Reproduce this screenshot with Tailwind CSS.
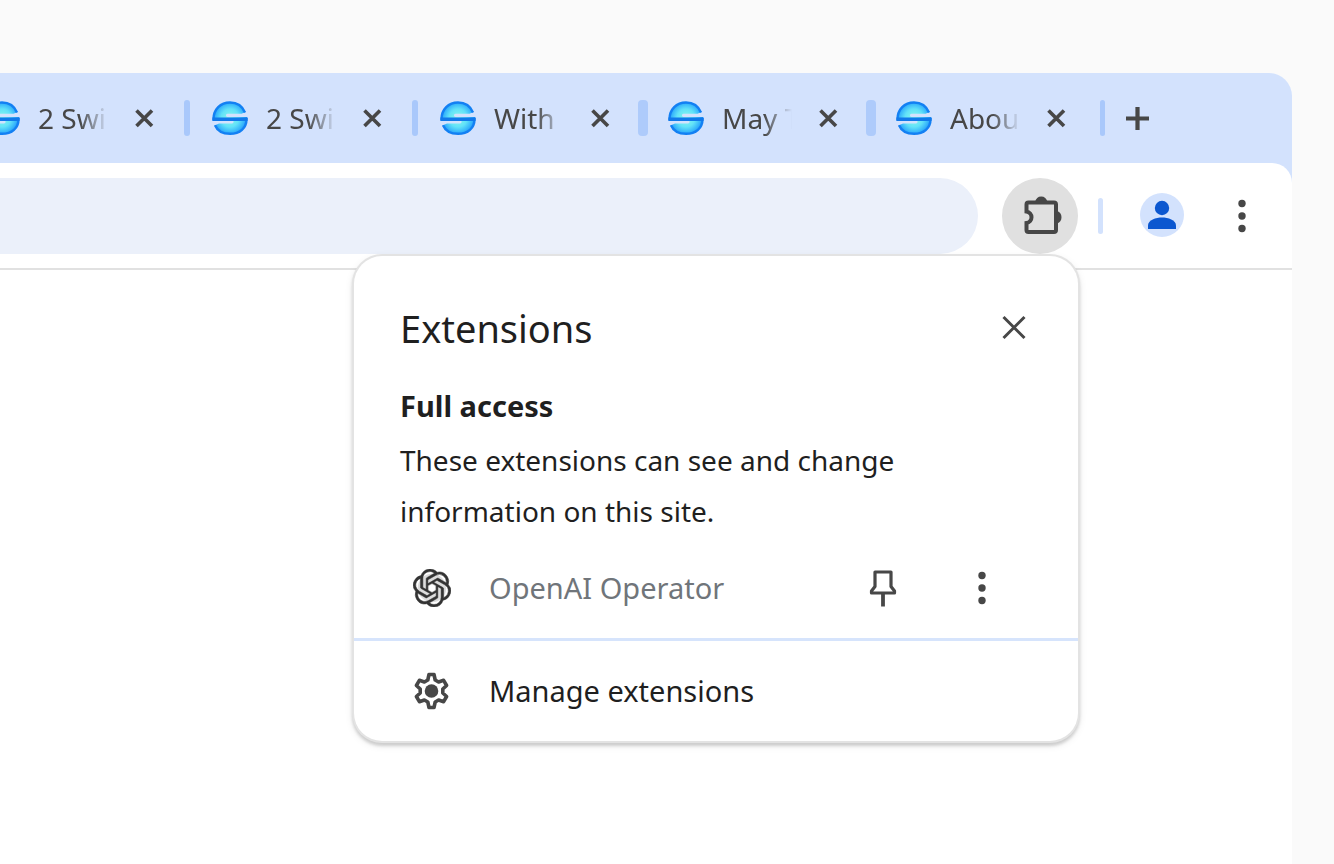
<!DOCTYPE html>
<html lang="en">
<head>
<meta charset="utf-8">
<title>Extensions</title>
<script src="https://cdn.jsdelivr.net/npm/@tailwindcss/browser@4"></script>
</head>
<body class="flex min-h-screen overflow-x-hidden bg-[#fafafa] pt-[73px] pr-[42px] font-['Noto_Sans',sans-serif] text-[#474747]">
<svg class="absolute size-0" aria-hidden="true">
  <defs>
    <radialGradient id="glow" gradientUnits="userSpaceOnUse" cx="18" cy="18" r="18">
      <stop offset="0" stop-color="#8cf8ea"/><stop offset="0.5" stop-color="#62e2f8"/><stop offset="0.800" stop-color="#35b4fb"/><stop offset="1" stop-color="#1f86f5"/>
    </radialGradient>
    <symbol id="site" viewBox="0 0 36 36">
      <path d="M1 20C0 10 8 2.200 18 2.200c7 0 13 4 15.500 9.800l-4 1.800H15.500c-2 0-2 3.200 0 3.200H35.200C36 27 28 34 18 34 10.500 34 5 31 2.500 25.500l4.500-2H20c2 0 2-3.500 0-3.500z" fill="url(#glow)"/>
      <path d="M33 12.500C30.500 6.500 25.500 2.500 18 2.500 8.500 2.500 1.500 9.500 1.500 19.200H34.500C34.500 28 28 33.800 18 33.800 10.500 33.800 5.500 31 3 25.200" fill="none" stroke="#1380f3" stroke-width="2.400"/>
      <path d="M0.500 19.200H35.500" stroke="#1179ea" stroke-width="3.600"/>
    </symbol>
    <symbol id="close" viewBox="0 0 36 36"><path d="M10.500 10.500 26 26M26 10.500 10.500 26" stroke="currentColor" stroke-width="3.600" fill="none"/></symbol>
    <symbol id="dots" viewBox="0 0 44 44"><g fill="currentColor"><circle cx="22" cy="9.500" r="3.700"/><circle cx="22" cy="22" r="3.700"/><circle cx="22" cy="34.500" r="3.700"/></g></symbol>
  </defs>
</svg>
<div class="relative min-w-0 flex-1 rounded-tr-[23px] bg-white">
  <header class="rounded-tr-[23px] bg-[#d3e2fd]">
    <nav aria-label="Tabs" class="flex h-[90px] items-center overflow-hidden text-[28px] leading-9">
      <div class="-ml-4 flex w-[228px] shrink-0 items-center">
        <svg class="size-9 shrink-0"><use href="#site"/></svg>
        <a href="#" class="ml-[18px] w-[70px] overflow-hidden whitespace-nowrap [mask-image:linear-gradient(to_right,black_60%,transparent_100%)]">2 Swi</a>
        <button aria-label="Close tab" class="ml-[18px]"><svg class="size-9"><use href="#close"/></svg></button>
        <span class="ml-[22px] h-9 w-[6px] rounded-sm bg-[#a9c8fb]"></span>
      </div>
      <div class="flex w-[228px] shrink-0 items-center">
        <svg class="size-9 shrink-0"><use href="#site"/></svg>
        <a href="#" class="ml-[18px] w-[70px] overflow-hidden whitespace-nowrap [mask-image:linear-gradient(to_right,black_60%,transparent_100%)]">2 Swi</a>
        <button aria-label="Close tab" class="ml-[18px]"><svg class="size-9"><use href="#close"/></svg></button>
        <span class="ml-[22px] h-9 w-[6px] rounded-sm bg-[#a9c8fb]"></span>
      </div>
      <div class="flex w-[228px] shrink-0 items-center">
        <svg class="size-9 shrink-0"><use href="#site"/></svg>
        <a href="#" class="ml-[18px] w-[70px] overflow-hidden whitespace-nowrap [mask-image:linear-gradient(to_right,black_60%,transparent_100%)]">With</a>
        <button aria-label="Close tab" class="ml-[18px]"><svg class="size-9"><use href="#close"/></svg></button>
        <span class="ml-5 h-9 w-[10px] rounded-sm bg-[#aecbfb]"></span>
      </div>
      <div class="flex w-[228px] shrink-0 items-center">
        <svg class="size-9 shrink-0"><use href="#site"/></svg>
        <a href="#" class="ml-[18px] w-[70px] overflow-hidden whitespace-nowrap [mask-image:linear-gradient(to_right,black_60%,transparent_100%)]">May T</a>
        <button aria-label="Close tab" class="ml-[18px]"><svg class="size-9"><use href="#close"/></svg></button>
        <span class="ml-5 h-9 w-[10px] rounded-sm bg-[#aecbfb]"></span>
      </div>
      <div class="flex w-[228px] shrink-0 items-center">
        <svg class="size-9 shrink-0"><use href="#site"/></svg>
        <a href="#" class="ml-[18px] w-[70px] overflow-hidden whitespace-nowrap [mask-image:linear-gradient(to_right,black_60%,transparent_100%)]">Abou</a>
        <button aria-label="Close tab" class="ml-[18px]"><svg class="size-9"><use href="#close"/></svg></button>
        <span class="ml-[26px] h-9 w-[5px] rounded-sm bg-[#a9c8fb]"></span>
      </div>
      <button aria-label="New tab" class="-ml-1"><svg class="size-9" viewBox="0 0 36 36"><path d="M17.500 7v23M6 18.500h23" stroke="currentColor" stroke-width="4.200"/></svg></button>
    </nav>
    <div class="flex h-[107px] items-center rounded-tr-[20px] border-b-2 border-[#e1e1e1] bg-white pr-7">
      <input aria-label="Address" type="text" class="h-[76px] min-w-0 flex-1 rounded-r-full bg-[#ebf0fa] px-8 text-[28px] outline-none">
      <button aria-label="Extensions" class="ml-6 flex size-[76px] shrink-0 items-center justify-center rounded-full bg-[#e0e0e0]">
        <svg class="size-11" viewBox="0 0 44 44"><path d="M10.500 8.500H36a2 2 0 0 1 2 2V36a2 2 0 0 1-2 2H10.500a2 2 0 0 1-2-2V29C11.500 28.500 13.500 26 13.500 23.200S11.500 18 8.500 17.500V10.500a2 2 0 0 1 2-2z" fill="none" stroke="currentColor" stroke-width="4"/><path d="M17 8c.8-3.500 3-5.500 6.200-5.500s5.500 2 6.300 5.500zM38.500 17c3.500.8 5 3 5 6.200s-1.500 5.500-5 6.300z" fill="currentColor"/></svg>
      </button>
      <span class="ml-5 h-9 w-[5px] rounded-sm bg-[#d3e2fd]"></span>
      <button aria-label="Profile" class="ml-9 shrink-0"><svg class="size-[46px]" viewBox="0 0 46 46"><circle cx="23" cy="22" r="22" fill="#d3e2fd"/><circle cx="23" cy="15" r="7.200" fill="#0b57d0"/><path d="M9 36V32.500C9 27 17 24.500 23 24.500S37 27 37 32.500V36z" fill="#0b57d0"/></svg></button>
      <button aria-label="Menu" class="ml-[35px] shrink-0"><svg class="size-11"><use href="#dots"/></svg></button>
    </div>
  </header>

  <section aria-label="Extensions" class="absolute top-[183px] right-[214px] w-[724px] rounded-[28px] bg-white text-[29px] text-[#1f1f1f] shadow-[0_0_0_2px_#e3e3e3,0_3px_3px_2px_rgba(0,0,0,0.14),0_3px_8px_1px_rgba(0,0,0,0.10)]">
    <div class="px-[46px] pt-[46px]">
      <div class="flex items-center justify-between">
        <h1 class="text-[38px] leading-[52px]">Extensions</h1>
        <button aria-label="Close" class="text-[#474747]"><svg class="size-9" viewBox="0 0 36 36"><path d="M7.500 7 28.500 28M28.500 7 7.500 28" stroke="currentColor" stroke-width="3"/></svg></button>
      </div>
      <h2 class="mt-[26px] leading-[51px] font-bold">Full access</h2>
      <p class="mt-1 text-[28px] leading-[51px]">These extensions can see and change<br>information on this site.</p>
    </div>
    <div class="flex h-[104px] items-center border-b-[3px] border-[#d6e4fc] pr-[74px] pl-[59px] text-[#474747]">
      <button class="flex flex-1 items-center gap-[38px] text-left text-[#70757a]">
        <svg class="size-[38px] shrink-0" viewBox="0 0 24 24" fill="#333"><circle cx="12" cy="12" r="9" fill="#ddd"/><circle cx="12" cy="12" r="2" fill="#fff"/><path stroke="#333" stroke-width="0.300" d="M22.2819 9.8211a5.9847 5.9847 0 0 0-.5157-4.9108 6.0462 6.0462 0 0 0-6.5098-2.9A6.0651 6.0651 0 0 0 4.9807 4.1818a5.9847 5.9847 0 0 0-3.9977 2.9 6.0462 6.0462 0 0 0 .7427 7.0966 5.98 5.98 0 0 0 .511 4.9107 6.051 6.051 0 0 0 6.5146 2.9001A5.9847 5.9847 0 0 0 13.2599 24a6.0557 6.0557 0 0 0 5.7718-4.2058 5.9894 5.9894 0 0 0 3.9977-2.9001 6.0557 6.0557 0 0 0-.7475-7.0729zm-9.022 12.6081a4.4755 4.4755 0 0 1-2.8764-1.0408l.1419-.0804 4.7783-2.7582a.7948.7948 0 0 0 .3927-.6813v-6.7369l2.02 1.1686a.071.071 0 0 1 .038.052v5.5826a4.504 4.504 0 0 1-4.4945 4.4944zm-9.6607-4.1254a4.4708 4.4708 0 0 1-.5346-3.0137l.142.0852 4.783 2.7582a.7712.7712 0 0 0 .7806 0l5.8428-3.3685v2.3324a.0804.0804 0 0 1-.0332.0615L9.74 19.9502a4.4992 4.4992 0 0 1-6.1408-1.6464zM2.3408 7.8956a4.485 4.485 0 0 1 2.3655-1.9728V11.6a.7664.7664 0 0 0 .3879.6765l5.8144 3.3543-2.0201 1.1685a.0757.0757 0 0 1-.071 0l-4.8303-2.7865A4.504 4.504 0 0 1 2.3408 7.872zm16.5963 3.8558L13.1038 8.364 15.1192 7.2a.0757.0757 0 0 1 .071 0l4.8303 2.7913a4.4944 4.4944 0 0 1-.6765 8.1042v-5.6772a.79.79 0 0 0-.407-.667zm2.0107-3.0231l-.142-.0852-4.7735-2.7818a.7759.7759 0 0 0-.7854 0L9.409 9.2297V6.8974a.0662.0662 0 0 1 .0284-.0615l4.8303-2.7866a4.4992 4.4992 0 0 1 6.6802 4.66zM8.3065 12.863l-2.02-1.1638a.0804.0804 0 0 1-.038-.0567V6.0742a4.4992 4.4992 0 0 1 7.3757-3.4537l-.142.0805L8.704 5.459a.7948.7948 0 0 0-.3927.6813zm1.0976-2.3654l2.602-1.4998 2.6069 1.4998v2.9994l-2.5974 1.4997-2.6067-1.4997Z"/></svg>
        OpenAI Operator
      </button>
      <button aria-label="Pin extension" class="mr-14"><svg class="size-11" viewBox="0 0 44 44"><path d="M15 6H31V20.500L34.500 25V27H11.500V25L15 20.500z" fill="none" stroke="currentColor" stroke-width="3.200" stroke-linejoin="round"/><path d="M23 27V40.500" stroke="currentColor" stroke-width="3.800"/></svg></button>
      <button aria-label="More options"><svg class="size-11"><use href="#dots"/></svg></button>
    </div>
    <button class="flex h-[100px] w-full items-center gap-[38px] pl-[59px] text-left">
      <svg class="size-[38px] shrink-0 text-[#474747]" viewBox="0 0 38 38"><path d="M16 2.500h5l1.200 5.500 3.400 2 5-1.700 3 5.200-3.800 3.500v4l3.800 3.500-3 5.200-5-1.700-3.400 2-1.200 5.500h-5l-1.200-5.500-3.400-2-5 1.700-3-5.200 3.800-3.500v-4l-3.800-3.500 3-5.200 5 1.700 3.400-2z" fill="none" stroke="currentColor" stroke-width="3.600" stroke-linejoin="round"/><circle cx="18.500" cy="19" r="6.800" fill="currentColor"/></svg>
      Manage extensions
    </button>
  </section>
</div>
</body>
</html>
